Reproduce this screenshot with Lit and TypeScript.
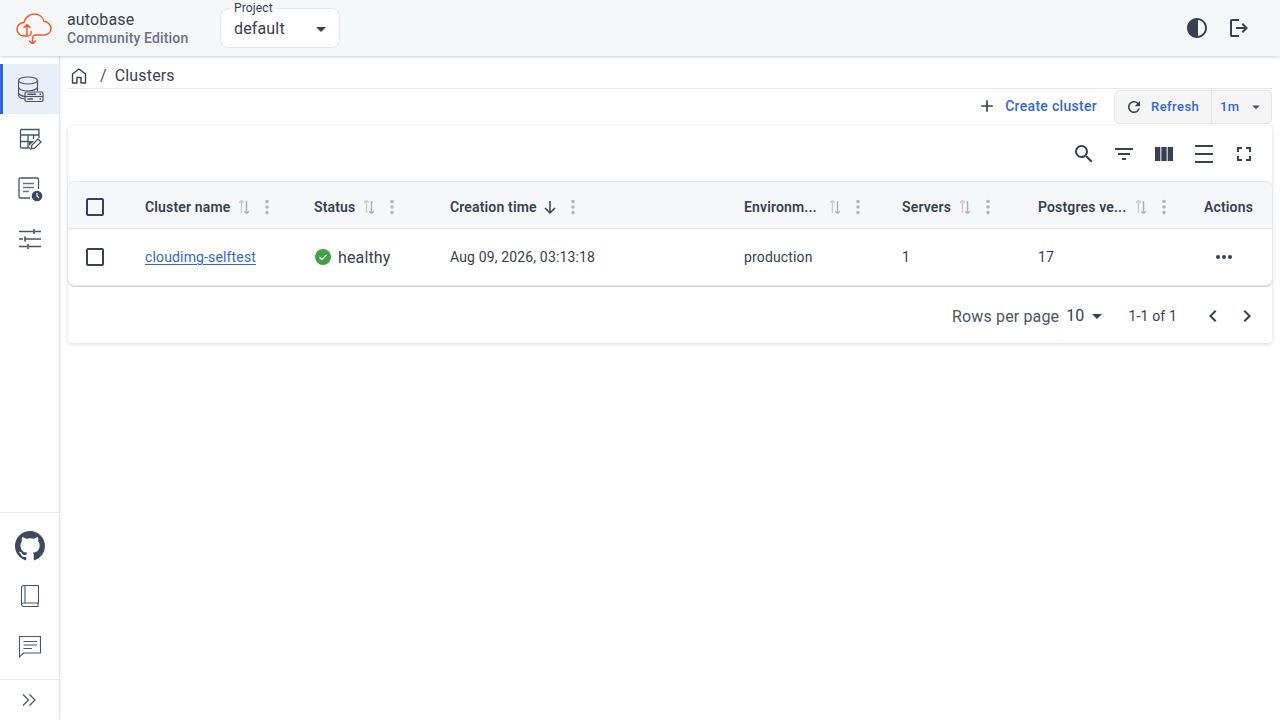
import { LitElement, html, css, svg } from 'lit';
import { customElement } from 'lit/decorators.js';

const icon = (size: number, d: string, cls = '') => html`<svg class=${cls} width=${size} height=${size} viewBox="0 0 24 24" fill="currentColor"><path d=${d}></path></svg>`;

const SORT = svg`<path d="M5.500 1.500 L3.200 3.800 M5.500 1.500 L7.800 3.800 M5.500 1.500 V14" stroke="#c9cdd3" stroke-width="1.400" fill="none"/><path d="M10.500 14.500 L8.200 12.200 M10.500 14.500 L12.800 12.200 M10.500 14.500 V2" stroke="#aab0b9" stroke-width="1.400" fill="none"/>`;
const sortIcon = html`<svg class="sort" width="16" height="16" viewBox="0 0 16 16">${SORT}</svg>`;
const dots = html`<svg class="dots" width="4" height="16" viewBox="0 0 4 16" fill="#b0b5bd"><circle cx="2" cy="2.500" r="1.800"/><circle cx="2" cy="8" r="1.800"/><circle cx="2" cy="13.500" r="1.800"/></svg>`;

const columns = [
  { name: 'Cluster name', gap: 6 },
  { name: 'Status', gap: 6 },
  { name: 'Creation time', gap: 5 },
  { name: 'Environm...', gap: 10 },
  { name: 'Servers', gap: 6 },
  { name: 'Postgres ve...', gap: 7 },
];

@customElement('app-root')
export class AppRoot extends LitElement {
  static styles = css`
    :host {
      display: block;
      width: 1280px;
      height: 720px;
      overflow: hidden;
      background: #fff;
      color: #374151;
      font-family: Roboto, "Liberation Sans", sans-serif;
      letter-spacing: 0.15px;
    }
    * { box-sizing: border-box; }
    svg { display: block; flex: none; }
    .header {
      height: 56px;
      background: #f6f7f9;
      box-shadow: 0 1px 3px rgba(55, 65, 81, 0.25);
      display: flex;
      align-items: center;
      padding: 0 29px 0 15px;
      position: relative;
      z-index: 2;
    }
    .brand { margin-left: 14px; padding-top: 2px; line-height: 18px; width: 153px; }
    .brand .t1 { font-size: 16px; }
    .brand .t2 { font-size: 14px; font-weight: 500; color: #6b7280; }
    .project {
      width: 120px;
      height: 40px;
      border: 1px solid #e3e5e9;
      border-radius: 8px;
      background: #fff;
      position: relative;
      display: flex;
      align-items: center;
      justify-content: space-between;
      padding: 1px 6px 0 13px;
      font-size: 16px;
    }
    .project label {
      position: absolute;
      top: -8px;
      left: 9px;
      padding: 0 4px;
      font-size: 12px;
      line-height: 14px;
      background: linear-gradient(#f6f7f9 8px, #fff 8px);
    }
    .spacer { flex: 1; }
    .head-actions { display: flex; gap: 18px; align-items: center; }
    .body { display: flex; height: 664px; }
    .side {
      width: 60px;
      flex: none;
      border-right: 1px solid #e5e7eb;
      box-shadow: 1px 0 2px rgba(55, 65, 81, 0.08);
      display: flex;
      flex-direction: column;
      color: #4b5563;
    }
    .nav { padding-top: 8px; flex: 1; }
    .nav-item { height: 50px; display: flex; align-items: center; justify-content: center; }
    .nav-item.active { background: #e9eff9; box-shadow: inset 3px 0 0 #3367d6; padding-left: 2px; }
    .side-bottom { border-top: 1px solid #e5e7eb; padding: 8px 0; }
    .expand { border-top: 1px solid #e5e7eb; height: 41px; display: flex; align-items: center; justify-content: center; padding-right: 2px; }
    .main { flex: 1; padding: 6px 8px 0; min-width: 0; }
    .crumbs {
      height: 27px;
      border-bottom: 1px solid #e5e7eb;
      display: flex;
      align-items: center;
      font-size: 16px;
      padding: 1px 0 0 2px;
    }
    .crumbs .sep { margin: 0 8px 0 12px; color: #4b5563; }
    .toolbar {
      height: 37px;
      padding-top: 1px;
      display: flex;
      justify-content: flex-end;
      align-items: flex-start;
    }
    .blue { color: #3367d6; font-size: 14px; font-weight: 500; letter-spacing: 0.3px; }
    .create { height: 32px; display: flex; align-items: center; gap: 8px; margin-right: 17px; }
    .create svg { color: #374151; }
    .refresh {
      width: 158px;
      height: 34px;
      border: 1px solid #e3e5e9;
      border-radius: 5px;
      background: #f5f5f6;
      display: flex;
      align-items: center;
      font-size: 13px;
      letter-spacing: 0.45px;
    }
    .refresh .l { width: 97px; display: flex; align-items: center; gap: 8px; padding: 0 0 1px 10px; height: 100%; border-right: 1px solid #e3e5e9; }
    .refresh .r { display: flex; align-items: center; justify-content: space-between; flex: 1; padding: 0 6px 1px 8px; }
    .card {
      height: 217px;
      border-radius: 4px;
      background: #fff;
      box-shadow: 0 1px 4px rgba(55, 65, 81, 0.2);
    }
    .card-tools {
      height: 56px;
      display: flex;
      justify-content: flex-end;
      align-items: center;
      gap: 16px;
      padding-right: 16px;
    }
    .table { border-radius: 6px; box-shadow: 0 0 0 1px #e5e7eb, 0 2px 1px rgba(55, 65, 81, 0.25); }
    .row { display: grid; grid-template-columns: 61px 169px 136px 294px 158px 136px 166px 84px; align-items: center; }
    .row.head { height: 47px; padding-top: 3px; background: #f6f7f9; border-bottom: 1px solid #e2e5ea; border-radius: 6px 6px 0 0; font-size: 14px; font-weight: 600; }
    .row.data { height: 56px; font-size: 14px; }
    .cell { padding-left: 16px; display: flex; align-items: center; white-space: nowrap; }
    .check { padding-left: 18px; }
    .head .check { padding-top: 1px; }
    .box { width: 18px; height: 18px; border: 2px solid #374151; border-radius: 2px; }
    .link { color: #3367d6; text-decoration: underline; text-underline-offset: 2px; }
    .healthy { font-size: 16px; display: flex; align-items: center; gap: 7px; padding-left: 1px; }
    .sort { margin-right: 13px; }
    .more { padding-left: 27px; }
    .footer {
      height: 56px;
      margin-top: 2px;
      padding: 1px 13px 0 0;
      display: flex;
      justify-content: flex-end;
      align-items: center;
    }
    .per-page { font-size: 16px; color: #4b5563; margin-right: 7px; padding-top: 1px; }
    .per-value { font-size: 16px; }
    .per-arrow { margin-right: 8px; }
    .range { font-size: 14px; margin: 0 24px 0 12px; }
    .pager-gap { width: 10px; }
  `;

  render() {
    return html`
      <div class="header">
        <svg width="38" height="32" viewBox="0 0 38 32" fill="none" stroke="#f15a29" stroke-width="1.500" stroke-linecap="round" stroke-linejoin="round">
          <path d="M9 24 C4.500 24 2 20.500 2 17 C2 13.500 5 10.500 9 10.500 C10 6 14 2 19.500 2 C24.500 2 28 5.500 29 9.500 C33 9.500 36 13 36 16.500 C36 20 33 23 29.500 23 H21 C18.500 23 17.500 24.500 17.500 27 V32"/>
          <path d="M14.500 29 L17.500 32 L20.500 29"/>
          <path d="M12 23.500 V12.500 M9 15.500 L12 12.500 L15 15.500 M9 24 H13 C15.500 24 16.500 22 16 19.500"/>
        </svg>
        <div class="brand">
          <div class="t1">autobase</div>
          <div class="t2">Community Edition</div>
        </div>
        <div class="project">
          <label>Project</label>
          <span>default</span>
          ${icon(24, 'M7 10l5 5 5-5z')}
        </div>
        <div class="spacer"></div>
        <div class="head-actions">
          ${icon(24, 'M12 2C6.480 2 2 6.480 2 12s4.480 10 10 10 10-4.480 10-10S17.520 2 12 2zm1 17.930V4.070c3.940.490 7 3.850 7 7.930s-3.060 7.440-7 7.930z')}
          ${icon(24, 'M5 21c-.550 0-1-.200-1.400-.600S3 19.550 3 19V5c0-.550.200-1 .600-1.400S4.450 3 5 3h7v2H5v14h7v2H5zm11-4l-1.400-1.450L17.150 13H9v-2h8.150l-2.550-2.550L16 7l5 5-5 5z')}
        </div>
      </div>
      <div class="body">
        <div class="side">
          <div class="nav">
            <div class="nav-item active">
              <svg width="26" height="26" viewBox="0 0 26 26" fill="none" stroke="#4b5563" stroke-width="1.200">
                <ellipse cx="10" cy="4.500" rx="9.500" ry="3.500"/>
                <path d="M.5 4.500 V19 C.5 21 3 22.500 7 23 M.5 11 C.5 13.500 5 15 10 15 C14 15 19.500 13.500 19.500 11 M.5 17 C1 18.500 3.500 20 7 20.500 M19.500 4.500 V15"/>
                <rect x="7" y="16" width="18" height="9.500" rx="1.500" fill="#e9eff9"/>
                <path d="M7 20.500 H25"/>
                <path d="M9.500 18.300 H18 M21.500 18.300 H23 M9.500 23 H15 M21.500 23 H23" stroke-width="1.400"/>
              </svg>
            </div>
            <div class="nav-item">
              <svg width="24" height="24" viewBox="0 0 24 24" fill="none" stroke="#4b5563" stroke-width="1.300">
                <path d="M12 21 H4 C3 21 2.500 20.500 2.500 19.500 V3.500 C2.500 3 3 2.500 3.500 2.500 H21 V11"/>
                <path d="M2.500 8 H21 M2.500 14.500 H11 M10 8 V21 M15.500 8 V12"/>
                <path d="M13 22 L14 18 L20 12 L23 15 L17 21 Z" fill="#fff"/>
                <path d="M11 14 L16 14 L11 19 Z" fill="#4b5563" stroke="none"/>
              </svg>
            </div>
            <div class="nav-item">
              <svg width="26" height="26" viewBox="0 0 26 26" fill="none" stroke="#4b5563" stroke-width="1.300">
                <path d="M13 22 H3.500 C2.500 22 2 21.500 2 20.500 V3.500 C2 2.500 2.500 2 3.500 2 H20 C21 2 21.500 2.500 21.500 3.500 V13"/>
                <path d="M6 7.500 H17 M6 11.500 H17 M6 15.500 H12" stroke="#6b7280" stroke-width="1.600"/>
                <circle cx="20" cy="20" r="5.300" fill="#3c4a5c" stroke="none"/>
                <path d="M20 17 V20 L22 22" stroke="#fff" stroke-width="1.200"/>
              </svg>
            </div>
            <div class="nav-item">
              <svg width="24" height="24" viewBox="0 0 24 24" fill="none" stroke="#4b5563" stroke-width="1.700">
                <path d="M1 4.500 H15 M17 4.500 H23 M16 2 V7 M1 12 H5 M7 12 H23 M7 9.500 V14.500 M1 19.500 H9 M11 19.500 H23 M10 17 V22"/>
              </svg>
            </div>
          </div>
          <div class="side-bottom">
            <div class="nav-item">
              <svg width="30" height="30" viewBox="0 0 16 16" fill="#3c4a5c"><path d="M8 0C3.580 0 0 3.580 0 8c0 3.540 2.290 6.530 5.470 7.590.400.070.550-.170.550-.380 0-.190-.010-.820-.010-1.490-2.010.370-2.530-.490-2.690-.940-.090-.230-.480-.940-.820-1.130-.280-.150-.680-.520-.010-.530.630-.010 1.080.580 1.230.820.720 1.210 1.870.870 2.330.660.070-.520.280-.870.510-1.070-1.780-.200-3.640-.890-3.640-3.950 0-.870.310-1.590.820-2.150-.080-.200-.360-1.020.080-2.120 0 0 .670-.210 2.200.820.640-.180 1.320-.270 2-.270s1.360.090 2 .270c1.530-1.040 2.200-.820 2.200-.820.440 1.100.160 1.920.080 2.120.510.560.820 1.270.820 2.150 0 3.070-1.870 3.750-3.650 3.950.290.250.540.730.540 1.480 0 1.070-.010 1.930-.010 2.200 0 .210.150.460.550.380A8.010 8.010 0 0 0 16 8c0-4.420-3.580-8-8-8z"/></svg>
            </div>
            <div class="nav-item">
              <svg width="24" height="24" viewBox="0 0 24 24" fill="none" stroke="#4b5563" stroke-width="1.100">
                <path d="M20.500 1.500 H6 C4.500 1.500 3.500 2.500 3.500 4 V20 C3.500 21.500 4.500 22.500 6 22.500 H20.500 M20.500 1.500 V19 H6 C4.500 19 3.500 19.500 3.500 20.500 M7 1.500 V19 M20 19 V22.500"/>
              </svg>
            </div>
            <div class="nav-item">
              <svg width="26" height="26" viewBox="0 0 26 26" fill="none" stroke="#4b5563" stroke-width="1.100">
                <path d="M2.500 3.500 H23.500 V20 H6.500 L2.500 24 Z"/>
                <path d="M6.500 8.500 H20 M6.500 12 H20 M6.500 15.500 H15"/>
              </svg>
            </div>
          </div>
          <div class="expand">
            <svg width="16" height="14" viewBox="0 0 16 14" fill="none" stroke="#4b5563" stroke-width="1.300"><path d="M2 1.500 L7.500 7 L2 12.500 M8.500 1.500 L14 7 L8.500 12.500"/></svg>
          </div>
        </div>
        <div class="main">
          <div class="crumbs">
            <svg width="18" height="18" viewBox="0 0 18 18" fill="none" stroke="#374151" stroke-width="1.400"><path d="M2.500 16 V7 L9 2 L15.500 7 V16 H11 V10.500 H7 V16 Z" stroke-linejoin="round"/></svg>
            <span class="sep">/</span>
            <span>Clusters</span>
          </div>
          <div class="toolbar">
            <div class="create blue">
              ${icon(20, 'M19 13h-6v6h-2v-6H5v-2h6V5h2v6h6v2z')}
              <span>Create cluster</span>
            </div>
            <div class="refresh blue">
              <div class="l">
                <span style="color:#374151">${icon(18, 'M17.650 6.350A7.958 7.958 0 0 0 12 4c-4.420 0-7.990 3.580-7.990 8s3.570 8 7.990 8c3.730 0 6.840-2.550 7.730-6h-2.080A5.990 5.990 0 0 1 12 18c-3.310 0-6-2.690-6-6s2.690-6 6-6c1.660 0 3.140.690 4.220 1.780L13 11h7V4l-2.350 2.350z')}</span>
                <span>Refresh</span>
              </div>
              <div class="r">
                <span>1m</span>
                <span style="color:#4b5563">${icon(18, 'M7 10l5 5 5-5z')}</span>
              </div>
            </div>
          </div>
          <div class="card">
            <div class="card-tools">
              ${icon(24, 'M15.500 14h-.790l-.280-.270A6.471 6.471 0 0 0 16 9.500 6.500 6.500 0 1 0 9.500 16c1.610 0 3.090-.590 4.230-1.570l.270.280v.790l5 4.990L20.490 19l-4.990-5zm-6 0C7.010 14 5 11.990 5 9.500S7.010 5 9.500 5 14 7.010 14 9.500 11.990 14 9.500 14z')}
              ${icon(24, 'M10 18h4v-2h-4v2zM3 6v2h18V6H3zm3 7h12v-2H6v2z')}
              ${icon(24, 'M14.670 5v14H9.330V5h5.340zm1 14H21V5h-5.330v14zm-7.340 0V5H3v14h5.330z')}
              ${icon(24, 'M3 21h18v-2H3v2zM3 3v2h18V3H3zm0 10h18v-2H3v2z')}
              ${icon(24, 'M7 14H5v5h5v-2H7v-3zm-2-4h2V7h3V5H5v5zm12 7h-3v2h5v-5h-2v3zM14 5v2h3v3h2V5h-5z')}
            </div>
            <div class="table">
              <div class="row head">
                <div class="cell check"><div class="box"></div></div>
                ${columns.map((c, i) => html`
                  <div class="cell">
                    <span style="margin-right:${c.gap}px">${c.name}</span>
                    ${i === 2
                      ? html`<svg class="sort" width="16" height="16" viewBox="0 0 16 16" fill="none" stroke="#374151" stroke-width="1.500"><path d="M8 2 V14 M3 9 L8 14 L13 9"/></svg>`
                      : sortIcon}
                    ${dots}
                  </div>`)}
                <div class="cell">Actions</div>
              </div>
              <div class="row data">
                <div class="cell check"><div class="box"></div></div>
                <div class="cell"><span class="link">cloudimg-selftest</span></div>
                <div class="cell"><span class="healthy">
                  <svg width="16" height="16" viewBox="0 0 16 16"><circle cx="8" cy="8" r="8" fill="#43a047"/><path d="M4.500 8.200 L7 10.500 L11.500 5.800" fill="none" stroke="#fff" stroke-width="1.200"/></svg>
                  healthy</span></div>
                <div class="cell">Aug 09, 2026, 03:13:18</div>
                <div class="cell">production</div>
                <div class="cell">1</div>
                <div class="cell">17</div>
                <div class="cell more">
                  <svg width="18" height="6" viewBox="0 0 18 6" fill="#374151"><circle cx="3" cy="3" r="2"/><circle cx="9" cy="3" r="2"/><circle cx="15" cy="3" r="2"/></svg>
                </div>
              </div>
            </div>
            <div class="footer">
              <span class="per-page">Rows per page</span>
              <span class="per-value">10</span>
              <span class="per-arrow">${icon(24, 'M7 10l5 5 5-5z')}</span>
              <span class="range">1-1 of 1</span>
              ${icon(24, 'M15.410 7.410 14 6l-6 6 6 6 1.410-1.410L10.830 12z')}
              <span class="pager-gap"></span>
              ${icon(24, 'M10 6 8.590 7.410 13.170 12l-4.580 4.590L10 18l6-6z')}
            </div>
          </div>
        </div>
      </div>
    `;
  }
}
